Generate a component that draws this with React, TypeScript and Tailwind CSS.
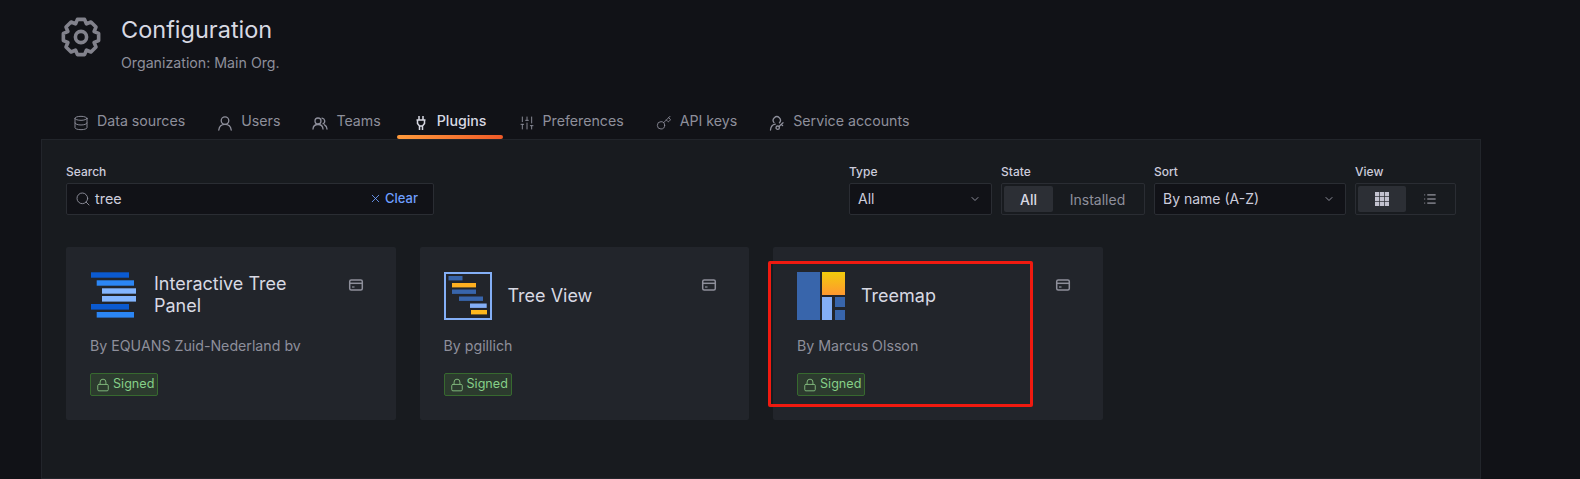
import { ChevronDown, Database, Key, List, Lock, Search, SlidersVertical, X } from "lucide-react";
import type { ReactNode } from "react";

// 8 tooth gear outline, computed once
function gearPath() {
  const points: string[] = [];
  for (let i = 0; i < 8; i++) {
    const a = (i * Math.PI) / 4 - Math.PI / 2;
    const offsets: [number, number][] = [
      [-0.39, 14.2],
      [-0.2, 18],
      [0.2, 18],
      [0.39, 14.2],
    ];
    offsets.forEach(([o, r]) => {
      points.push(`${(20 + r * Math.cos(a + o)).toFixed(2)} ${(20 + r * Math.sin(a + o)).toFixed(2)}`);
    });
  }
  return `M${points.join("L")}Z`;
}

function GearIcon() {
  return (
    <svg width="40" height="40" viewBox="0 0 40 40" fill="none" stroke="#82828c" strokeWidth="3.6" strokeLinejoin="round">
      <path d={gearPath()} />
      <circle cx="20" cy="20" r="5.6" />
    </svg>
  );
}

function UserIcon() {
  return (
    <svg width="16" height="16" viewBox="0 0 16 16" fill="none" stroke="currentColor" strokeWidth="1.3" strokeLinecap="round">
      <circle cx="8" cy="5.6" r="3.8" />
      <path d="M1.8 15c.4-3.4 3-5.6 6.2-5.6s5.8 2.2 6.2 5.6" />
    </svg>
  );
}

function TeamsIcon() {
  return (
    <svg width="16" height="16" viewBox="0 0 16 16" fill="none" stroke="currentColor" strokeWidth="1.3" strokeLinecap="round">
      <circle cx="6" cy="6" r="3" />
      <path d="M1 14c.2-2.800 2.200-4.500 5-4.500s4.800 1.700 5 4.500" />
      <path d="M10 3.100a3 3 0 0 1 1 5.700M12.500 9.800c1.500.7 2.400 2.200 2.500 4.200" />
    </svg>
  );
}

function PlugIcon() {
  return (
    <svg width="16" height="16" viewBox="0 0 16 16" fill="none" stroke="currentColor" strokeWidth="1.5">
      <path d="M6 1v4M10 1v4M3.500 5h9M4.500 5v3.500L6.500 11v4M11.500 5v3.500L9.500 11v4M6.500 11h3" />
    </svg>
  );
}

function ServiceAccountIcon() {
  return (
    <svg width="16" height="16" viewBox="0 0 16 16" fill="none" stroke="currentColor" strokeWidth="1.3" strokeLinecap="round">
      <path d="M10.500 7.700A3.600 3.600 0 1 0 5 7.600" />
      <path d="M1.500 15c.2-3 1.700-5.200 4.800-5.800" />
      <circle cx="8.700" cy="12.700" r="1.700" />
      <path d="M10 11.500l4-3.700M12.400 9.300l1.200 1.200" />
    </svg>
  );
}

function PanelIcon() {
  return (
    <svg width="16" height="16" viewBox="0 0 16 16" fill="none" stroke="currentColor" strokeWidth="1.5">
      <rect x="1.700" y="3" width="12.600" height="10" rx="1.500" />
      <path d="M1.700 6.300h12.600" />
      <path d="M4 10h2.500" strokeWidth="1.200" />
    </svg>
  );
}

function GridIcon() {
  return (
    <svg width="14" height="14" viewBox="0 0 14 14" fill="#c3c3d0">
      {[0, 4.9, 9.800].map((y) =>
        [0, 4.9, 9.800].map((x) => <rect key={`${x}-${y}`} x={x} y={y} width="4.200" height="4.200" />),
      )}
    </svg>
  );
}

function TreeIcon() {
  return (
    <svg width="48" height="48" viewBox="0 0 48 48" className="shrink-0">
      <rect x="1" y="0.300" width="38" height="5.400" fill="#0b5ad0" />
      <rect x="6.700" y="8.300" width="37.300" height="5.400" fill="#2b86f5" />
      <rect x="12" y="16.300" width="34" height="5.400" fill="#84b6ff" />
      <rect x="12" y="24" width="34" height="5.600" fill="#84b6ff" />
      <rect x="1" y="32" width="38" height="5.600" fill="#0b5ad0" />
      <rect x="6.700" y="40" width="37.300" height="5.600" fill="#2b86f5" />
    </svg>
  );
}

function TreeViewIcon() {
  return (
    <svg width="48" height="48" viewBox="0 0 48 48" className="shrink-0">
      <rect x="1" y="1" width="46" height="46" fill="none" stroke="#84aff6" strokeWidth="2" />
      <rect x="4.500" y="4" width="14" height="4.400" fill="#3865ab" />
      <rect x="8" y="11" width="24" height="4.400" fill="#ffb020" />
      <rect x="8" y="17.500" width="24" height="4.400" fill="#3865ab" />
      <rect x="15" y="24.500" width="24" height="4.400" fill="#3865ab" />
      <rect x="26" y="31.500" width="16.700" height="4.400" fill="#84aff6" />
      <rect x="27" y="38" width="16" height="4.400" fill="#ffb81c" />
    </svg>
  );
}

function TreemapIcon() {
  return (
    <svg width="48" height="48" viewBox="0 0 48 48" className="shrink-0">
      <defs>
        <linearGradient id="treemapOrange" x1="0" y1="0" x2="0" y2="1">
          <stop offset="0" stopColor="#f2cc0c" />
          <stop offset="1" stopColor="#ff9830" />
        </linearGradient>
      </defs>
      <rect x="0" y="0" width="23" height="48" fill="#3865ab" />
      <rect x="25" y="0" width="23" height="23" fill="url(#treemapOrange)" />
      <rect x="25" y="25" width="10" height="23" fill="#84aff6" />
      <rect x="38" y="25" width="10" height="10" fill="#3865ab" />
      <rect x="38" y="38" width="10" height="10" fill="#3865ab" />
    </svg>
  );
}

const tabs: { label: string; icon: ReactNode; active?: boolean }[] = [
  { label: "Data sources", icon: <Database size={16} strokeWidth={1.4} /> },
  { label: "Users", icon: <UserIcon /> },
  { label: "Teams", icon: <TeamsIcon /> },
  { label: "Plugins", icon: <PlugIcon />, active: true },
  { label: "Preferences", icon: <SlidersVertical size={16} strokeWidth={1.4} /> },
  { label: "API keys", icon: <Key size={16} strokeWidth={1.3} /> },
  { label: "Service accounts", icon: <ServiceAccountIcon /> },
];

const plugins: { title: string; titleClass: string; author: string; icon: ReactNode; highlight?: boolean }[] = [
  { title: "Interactive Tree Panel", titleClass: "-mt-[2px]", author: "By EQUANS Zuid-Nederland bv", icon: <TreeIcon /> },
  { title: "Tree View", titleClass: "mt-0", author: "By pgillich", icon: <TreeViewIcon /> },
  { title: "Treemap", titleClass: "mt-0", author: "By Marcus Olsson", icon: <TreemapIcon />, highlight: true },
];

function Field({ label, width, children }: { label: string; width: string; children: ReactNode }) {
  return (
    <div className={width}>
      <div className="mb-[1px] h-[20px] text-[12px] leading-[20px] font-medium text-[#ccccdc]">{label}</div>
      {children}
    </div>
  );
}

export default function App() {
  return (
    <div className="h-[479px] overflow-hidden bg-[#111217] font-['Inter',sans-serif] text-[#ccccdc]">
      {/* Page header */}
      <div className="flex h-[103px] pl-[61px] pt-[17px]">
        <GearIcon />
        <div className="ml-[20px]">
          <h1 className="-mt-[3px] text-[23.5px] leading-[32px] text-[#d8d9e3]">Configuration</h1>
          <p className="mt-[7px] text-[14.2px] leading-[20px] text-[#8e8f9b]">Organization: Main Org.</p>
        </div>
      </div>

      {/* Tabs */}
      <div className="flex h-[36px] pl-[57px]">
        {tabs.map((tab) => (
          <div
            key={tab.label}
            className={`relative flex h-[36px] items-center px-4 text-[14.2px] ${
              tab.active ? "font-medium text-[#d8d9e3]" : "text-[#8e8f9b]"
            }`}
          >
            <span className="mr-2 mt-[3px]">{tab.icon}</span>
            {tab.label}
            {tab.active && (
              <span className="absolute inset-x-0 bottom-0 h-[4px] rounded-[2px] bg-gradient-to-r from-[#ff9a3c] to-[#f05a28]" />
            )}
          </div>
        ))}
      </div>

      {/* Panel */}
      <div className="ml-[41px] h-[340px] w-[1440px] border border-[#22252b] bg-[#181b1f] px-6 pt-[22px]">
        <div className="flex justify-between">
          <Field label="Search" width="w-[368px]">
            <div className="flex h-[32px] items-center rounded-[2px] border border-[#2a2d33] bg-[#111217] pb-[1px] pl-[8px] pr-[15px] text-[14.4px]">
              <Search size={16} strokeWidth={1.4} className="text-[#8e8f9b]" />
              <span className="ml-[4px] flex-1">tree</span>
              <X size={13} strokeWidth={1.6} className="mr-[3px] text-[#6e9fff]" />
              <span className="text-[13px] font-medium text-[#6e9fff]">Clear</span>
            </div>
          </Field>
          <div className="flex gap-[9px]">
            <Field label="Type" width="w-[143px]">
              <div className="flex h-[32px] items-center justify-between rounded-[2px] border border-[#2a2d33] bg-[#111217] pb-[1px] pl-[8px] pr-[10px] text-[14px]">
                All
                <ChevronDown size={12} className="text-[#8e8f9b]" />
              </div>
            </Field>
            <Field label="State" width="w-[144px]">
              <div className="flex h-[32px] items-center rounded-[2px] border border-[#2a2d33] p-[2px] text-[14px]">
                <span className="flex h-[26px] w-[49px] items-center justify-center rounded-[2px] bg-[#2c2f35] font-medium text-[#d8d9e3]">
                  All
                </span>
                <span className="flex h-[26px] flex-1 items-center justify-center text-[#8e8f9b]">Installed</span>
              </div>
            </Field>
            <Field label="Sort" width="w-[192px]">
              <div className="flex h-[32px] items-center justify-between rounded-[2px] border border-[#2a2d33] bg-[#111217] pb-[1px] pl-[8px] pr-[10px] text-[14px]">
                By name (A-Z)
                <ChevronDown size={12} className="text-[#8e8f9b]" />
              </div>
            </Field>
            <Field label="View" width="w-[101px]">
              <div className="flex h-[32px] items-center rounded-[2px] border border-[#2a2d33] p-[2px]">
                <span className="flex h-[26px] w-[48px] items-center justify-center rounded-[2px] bg-[#2c2f35]">
                  <GridIcon />
                </span>
                <span className="flex h-[26px] flex-1 items-center justify-center text-[#b4b5c0]">
                  <List size={14} strokeWidth={1.7} />
                </span>
              </div>
            </Field>
          </div>
        </div>

        {/* Plugin cards */}
        <div className="mt-[32px] flex gap-6">
          {plugins.map((plugin) => (
            <div key={plugin.title} className="relative h-[173px] w-[329.5px] rounded-[2px] bg-[#22252b] px-6 pt-[25px]">
              <div className="flex h-[48px] items-center">
                {plugin.icon}
                <div className={`ml-4 w-[170px] text-[18px] leading-[22px] text-[#d8d9e3] ${plugin.titleClass}`}>{plugin.title}</div>
                <span className="ml-auto mr-2 -mt-[22px] text-[#8e8f9b]">
                  <PanelIcon />
                </span>
              </div>
              <div className="mt-[16px] text-[14.2px] leading-[20px] text-[#8e8f9b]">{plugin.author}</div>
              <div className="mt-[17px] flex h-[23px] w-[68px] items-center rounded-[2px] border border-[#37692f] bg-[#2c3b2e] pl-[5px] text-[12.6px] text-[#86cf88]">
                <Lock size={14} strokeWidth={1.7} className="mr-[3px] text-[#7fb57a]" />
                Signed
              </div>
              {plugin.highlight && (
                <div className="absolute left-[-5px] top-[14px] h-[146px] w-[265px] rounded-[2px] border-[3px] border-[#f01a10]" />
              )}
            </div>
          ))}
        </div>
      </div>
    </div>
  );
}
